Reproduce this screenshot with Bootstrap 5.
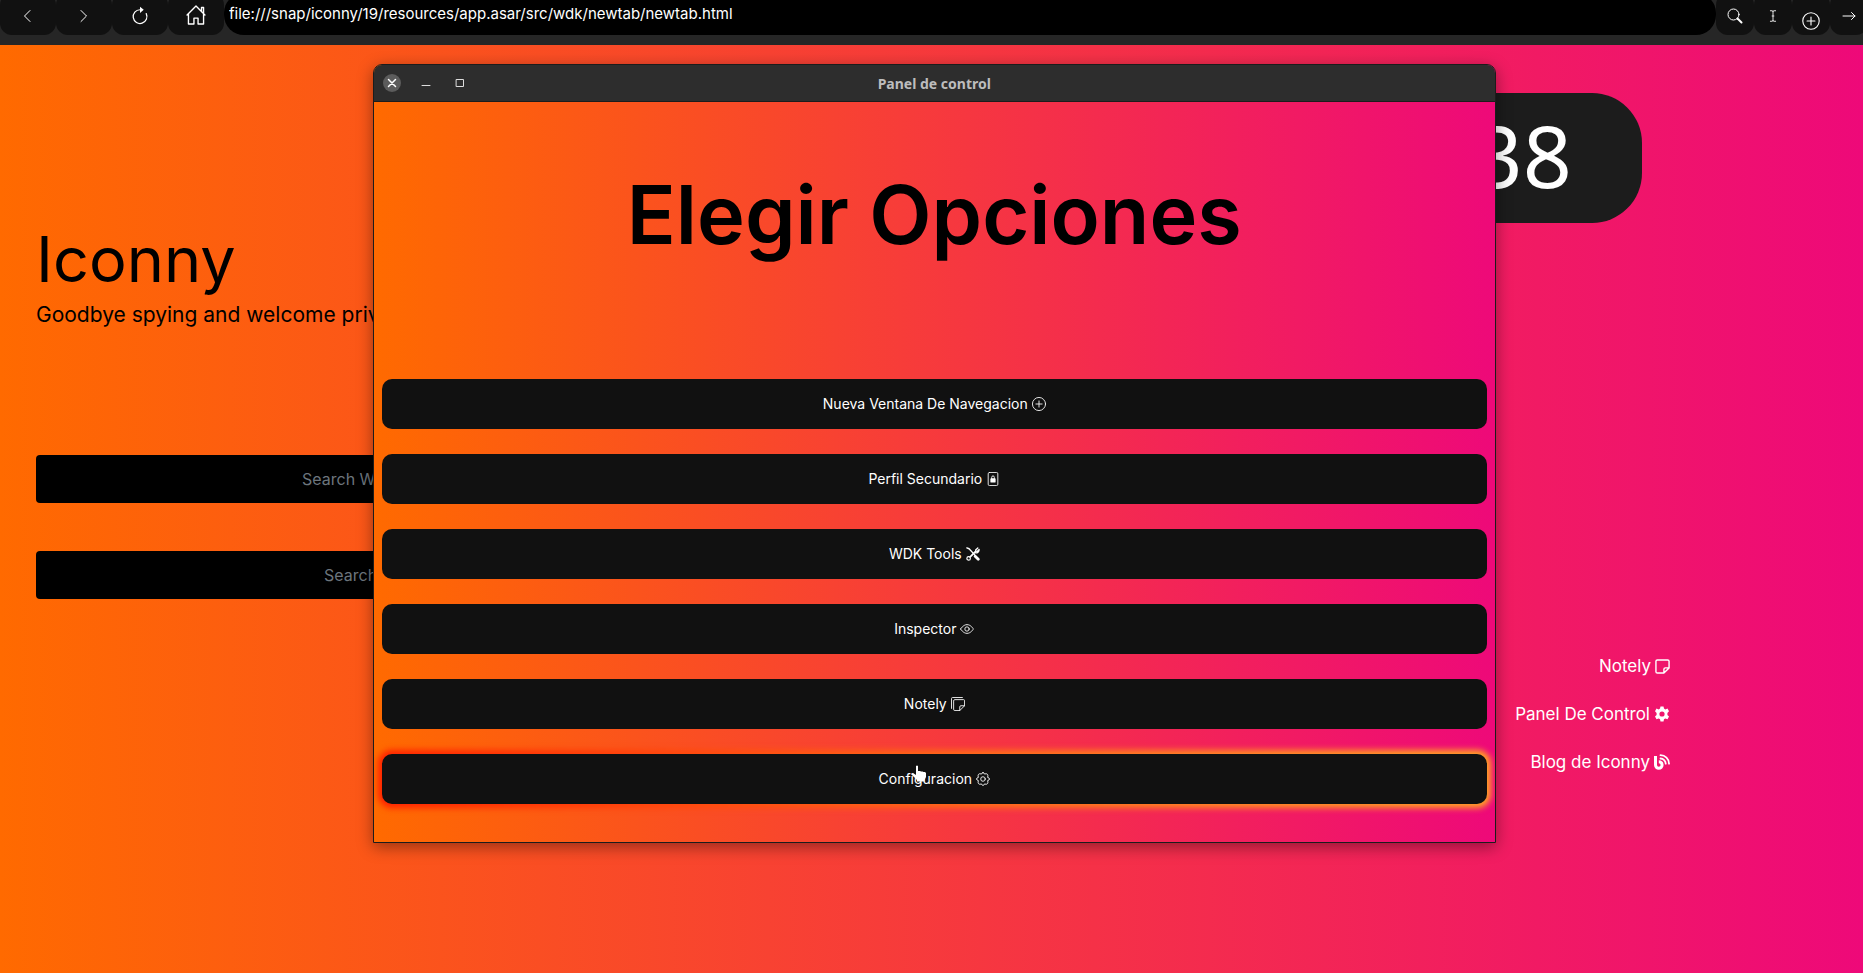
<!DOCTYPE html>
<html lang="es">
<head>
<meta charset="utf-8">
<meta name="viewport" content="width=device-width, initial-scale=1">
<title>Iconny</title>
<link href="https://cdn.jsdelivr.net/npm/bootstrap@5.3.0/dist/css/bootstrap.min.css" rel="stylesheet">
<style>
:root { --sunset: linear-gradient(to right, #ff6a00, #ee0979); }
body { font-family: Inter, "Open Sans", sans-serif; color: #000; background: #262626; }
svg { fill: none; stroke: currentColor; stroke-linecap: round; stroke-linejoin: round; flex: none; }
.solid { fill: currentColor; stroke: none; }
.toolbar { height: 45px; background: #262626; }
.toolbar-row { height: 42px; margin-top: -7px; margin-right: -5px; }
.tool { background: #111; color: #fff; border: 0; border-radius: 12px; padding: 0; flex: none; }
.tool-wide { width: 56px; }
.tool-slim { width: 38px; }
.address { background: #000; color: #fff; border: 0; border-radius: 20px; padding: 0 5px; font-size: 15px; min-width: 0; outline: 0; }
.page { background: var(--sunset); min-height: calc(100vh - 45px); }
.start { padding: 182px 0 0 36px; width: 45%; }
.brand-title { font-size: 63px; line-height: 64px; font-weight: 400; margin-bottom: 10px; }
.tagline { font-size: 21px; line-height: 28px; margin-bottom: 126px; }
.search-box { background: #000; border: 0; border-radius: 4px; height: 48px; padding: 0 16px 0 266px; font-size: 16px; margin-bottom: 48px; color: #fff; }
.search-box.short { padding-left: 288px; }
.search-box::placeholder { color: #6c757d; }
.side { padding-top: 48px; margin-right: 193px; }
.clock { background: #1c1c1c; color: #fff; border-radius: 50px; width: 400px; height: 130px; padding-right: 70px; margin-right: 28px; font: 400 86px/124px "Noto Sans", sans-serif; }
.side-links { margin-top: 431px; gap: 24px; }
.side-links a { color: #fff; text-decoration: none; font-size: 17px; line-height: 24px; gap: 4px; }
.panel { position: absolute; top: 64px; left: 20%; right: 19.7%; border: 1px solid #1c1c1c; border-radius: 9px 9px 0 0; box-shadow: 0 4px 16px rgba(0,0,0,.4); background: var(--sunset); overflow: hidden; }
.titlebar { height: 37px; background: #2d2d2d; color: #bdbdbd; border-bottom: 1px solid #1c1c1c; font: 700 14px/37px "Noto Sans", sans-serif; }
.win-buttons { width: 120px; padding-left: 9px; gap: 16px; }
.win-buttons button { width: 18px; height: 18px; padding: 0; border: 0; background: none; color: #ddd; border-radius: 50%; }
.win-buttons button.close-win { background: #5c5c5c; color: #fff; }
.panel-body { padding: 65px 8px 38px; }
.panel-title { font-size: 81px; line-height: 96px; font-weight: 600; margin-bottom: 116px; }
.option { background: #111; color: #fff; border: 0; border-radius: 10px; height: 50px; font-size: 14px; line-height: 20px; gap: 4px; }
.options { gap: 25px; }
.glow { position: relative; z-index: 0; }
.glow::before { content: ""; position: absolute; inset: -4px; z-index: -1; border-radius: 14px; background: linear-gradient(to right, #ff2000, #ff5a10 40%, #ff8a20 75%, #ffa820); filter: blur(3px); }
.pointer { position: absolute; left: calc(50% - 23px); top: 11px; color: #fff; }
</style>
</head>
<body>
<header class="toolbar overflow-hidden">
  <div class="toolbar-row d-flex">
    <button class="tool tool-wide" aria-label="Atrás"><svg width="16" height="16" viewBox="0 0 16 16"><path d="M10 2.500 4.500 8l5.500 5.500"/></svg></button>
    <button class="tool tool-wide" aria-label="Adelante"><svg width="16" height="16" viewBox="0 0 16 16"><path d="M5 2.500 10.500 8 5 13.500"/></svg></button>
    <button class="tool tool-wide" aria-label="Recargar"><svg width="20" height="20" viewBox="0 0 16 16"><path d="M8 3a5.500 5.500 0 1 0 5 3.100"/><path class="solid" d="M8 .5v5L11 3z"/></svg></button>
    <button class="tool tool-wide" aria-label="Inicio"><svg width="22" height="22" viewBox="0 0 16 16"><path d="M1.500 8 8 1.500 14.500 8M2.500 7.300v7.200h4v-4.200h3v4.200h4V7.300M12 5V2.500h1.500v4"/></svg></button>
    <input class="address flex-fill" type="text" aria-label="Dirección" value="file:///snap/iconny/19/resources/app.asar/src/wdk/newtab/newtab.html">
    <button class="tool tool-slim" aria-label="Buscar"><svg width="16" height="16" viewBox="0 0 16 16"><circle cx="6.500" cy="6.500" r="5.500"/><path d="M10.500 10.500 14.500 14.500" stroke-width="2"/></svg></button>
    <button class="tool tool-slim" aria-label="Texto"><svg width="14" height="14" viewBox="0 0 16 16"><path d="M5 2h2q1 0 1 1 0-1 1-1h2M8 3v10M5 14h2q1 0 1-1 0 1 1 1h2M7 8h2"/></svg></button>
    <button class="tool tool-slim pt-2" aria-label="Nueva pestaña"><svg class="mt-1" width="18" height="18" viewBox="0 0 16 16"><circle cx="8" cy="8" r="7.300"/><path d="M8 4.500v7M4.500 8h7"/></svg></button>
    <button class="tool tool-slim" aria-label="Ir"><svg width="16" height="16" viewBox="0 0 16 16"><path d="M2 8h12M10.500 4.500 14 8l-3.500 3.500"/></svg></button>
  </div>
</header>

<main class="page d-flex justify-content-between">
  <section class="start">
    <h1 class="brand-title">Iconny</h1>
    <p class="tagline">Goodbye spying and welcome privacy</p>
    <input class="search-box d-block w-100" type="text" placeholder="Search Web" aria-label="Search Web">
    <input class="search-box short d-block w-100" type="text" placeholder="Search" aria-label="Search">
  </section>
  <aside class="side d-flex flex-column align-items-end">
    <div class="clock text-end">38</div>
    <nav class="side-links d-flex flex-column align-items-end">
      <a class="d-flex align-items-center" href="#">Notely <svg width="15" height="15" viewBox="0 0 16 16" stroke-width="1.500"><path d="M1 2.500Q1 1 2.500 1h11Q15 1 15 2.500V9.500L9.500 15h-7Q1 15 1 13.500zM9.500 15v-4q0-1.500 1.500-1.500h4"/></svg></a>
      <a class="d-flex align-items-center" href="#">Panel De Control <svg class="solid" width="16" height="16" viewBox="0 0 16 16"><path fill-rule="evenodd" d="M6.500.4h3l.5 2.200 1.300.8 2.200-.8 1.500 2.600L13.400 7v2l1.600 1.600-1.500 2.600-2.200-.7-1.300.8-.5 2.300h-3L6 13.300l-1.300-.8-2.200.7L1 10.600 2.600 9V7L1 5.200l1.500-2.600 2.200.8L6 2.600zM8 5.400a2.600 2.600 0 1 0 0 5.200 2.600 2.600 0 0 0 0-5.200z"/></svg></a>
      <a class="d-flex align-items-center" href="#">Blog de Iconny <svg width="16" height="16" viewBox="0 0 16 16"><path d="M1.500 2v9a3.300 3.300 0 1 0 3.300-3.300" stroke-width="3" stroke-linecap="butt"/><path d="M6.500 1.200a8.500 8.500 0 0 1 8.500 8.500M6.500 4.500a5.200 5.200 0 0 1 5.200 5.200" stroke-width="1.800"/></svg></a>
    </nav>
  </aside>
</main>

<section class="panel" aria-label="Panel de control">
  <div class="titlebar d-flex">
    <div class="win-buttons d-flex align-items-center">
      <button class="close-win d-flex" aria-label="Cerrar"><svg width="18" height="18" viewBox="0 0 18 18" stroke-width="1.500"><path d="m5.500 5.500 7 7m0-7-7 7"/></svg></button>
      <button class="d-flex" aria-label="Minimizar"><svg width="18" height="18" viewBox="0 0 18 18"><path d="M5 11.500h8"/></svg></button>
      <button class="d-flex" aria-label="Maximizar"><svg width="18" height="18" viewBox="0 0 18 18"><path d="M5.500 5.500h7v7h-7z"/></svg></button>
    </div>
    <div class="flex-fill text-center">Panel de control</div>
    <div class="win-buttons"></div>
  </div>
  <div class="panel-body">
    <h2 class="panel-title text-center">Elegir Opciones</h2>
    <div class="options d-flex flex-column">
      <button class="option d-flex align-items-center justify-content-center">Nueva Ventana De Navegacion <svg width="14" height="14" viewBox="0 0 16 16"><circle cx="8" cy="8" r="7.500"/><path d="M8 4.500v7M4.500 8h7"/></svg></button>
      <button class="option d-flex align-items-center justify-content-center">Perfil Secundario <svg width="14" height="14" viewBox="0 0 16 16"><rect x="2.500" y=".5" width="11" height="15" rx="1.500"/><path d="M6.500 8V6a1.500 1.500 0 0 1 3 0v2"/><rect class="solid" x="5" y="7" width="6" height="5" rx="1"/></svg></button>
      <button class="option d-flex align-items-center justify-content-center">WDK Tools <svg width="14" height="14" viewBox="0 0 16 16"><path d="m1 1 2.500 1L10 9" stroke-width="1.600"/><path d="m10.500 10.500 3.500 3.500" stroke-width="3.200"/><path d="M4.800 11.200 11 5" stroke-width="2"/><circle cx="3" cy="13" r="2" stroke-width="1.300"/><path d="M13.500 1.200 11 3.500l.3 1.300 1.500.3L15 2.800a3.500 3.500 0 0 1-4.500 3.700" stroke-width="1.500"/></svg></button>
      <button class="option d-flex align-items-center justify-content-center">Inspector <svg width="14" height="14" viewBox="0 0 16 16"><path d="M.7 8S3.500 3 8 3s7.300 5 7.300 5-2.800 5-7.300 5S.7 8 .7 8z"/><circle cx="8" cy="8" r="2.500"/></svg></button>
      <button class="option d-flex align-items-center justify-content-center">Notely <svg width="14" height="14" viewBox="0 0 16 16"><path d="M.6 13V1.800Q.6.600 1.800.6H13M3 4.200Q3 3 4.200 3h10.100q1.200 0 1.200 1.200V10L10 15.500H4.200Q3 15.500 3 14.300zM10 15.500v-4.200q0-1.300 1.300-1.300h4.200"/></svg></button>
      <div class="glow">
        <button class="option w-100 d-flex align-items-center justify-content-center">Configuracion <svg width="14" height="14" viewBox="0 0 16 16"><path d="M8 .6Q9 .6 9.800 2.400 11.800 1.200 13.200 2.800 14 4 13.300 6.200 15.400 6.600 15.400 8T13.300 9.800Q14 12 13.200 13.200 11.800 14.800 9.800 13.600 9 15.400 8 15.400T6.200 13.600Q4.200 14.800 2.800 13.200 2 12 2.700 9.800.6 9.400.6 8T2.700 6.200Q2 4 2.800 2.800 4.200 1.200 6.200 2.400 7 .6 8 .6z"/><circle cx="8" cy="8" r="2.600"/></svg></button>
        <svg class="pointer solid" width="16" height="18" viewBox="0 0 16 18" aria-hidden="true"><path d="M5 1q1-1 2 0v5h2l1 .5h1.500l1 .5H14l1 1v4l-1.500 3v1.500H6V15l-3-3-2.500-2.500q0-1.500 1.500-1.500L5 10z"/></svg>
      </div>
    </div>
  </div>
</section>
<script src="https://cdn.jsdelivr.net/npm/bootstrap@5.3.0/dist/js/bootstrap.bundle.min.js"></script>
</body>
</html>
